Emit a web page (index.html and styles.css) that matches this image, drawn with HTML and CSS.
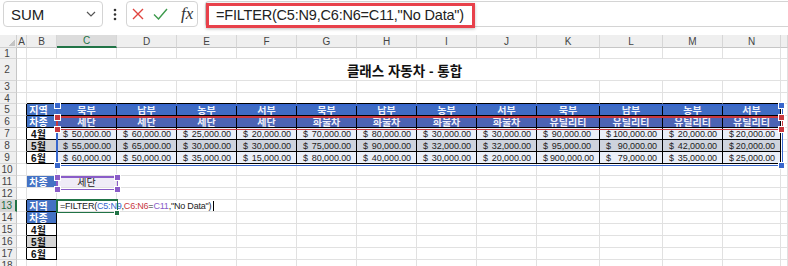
FILE: index.html
```html
<!DOCTYPE html>
<html lang="ko">
<head>
    <meta charset="UTF-8">
    <title>FILTER - 클래스 자동차</title>
    <link rel="stylesheet" href="styles.css">
</head>
<body>
<div class="app">
    <div class="fbar">
        <div class="namebox">
            <span>SUM</span>
            <svg width="10" height="6" viewBox="0 0 10 6"><path d="M1 1l4 4 4-4" fill="none" stroke="#555" stroke-width="1.2"/></svg>
        </div>
        <div class="more">
            <svg width="4" height="13" viewBox="0 0 4 13"><circle cx="2" cy="2" r="1.3" fill="#333"/><circle cx="2" cy="6.5" r="1.3" fill="#333"/><circle cx="2" cy="11" r="1.3" fill="#333"/></svg>
        </div>
        <div class="btns">
            <svg width="12" height="12" viewBox="0 0 12 12"><path d="M1 1l10 10M11 1L1 11" stroke="#e0443f" stroke-width="1.4"/></svg>
            <svg width="15" height="12" viewBox="0 0 15 12"><path d="M1 6.5l4.5 4.5L14 1" fill="none" stroke="#3d9a4c" stroke-width="1.4"/></svg>
            <span class="fx">fx</span>
        </div>
        <div class="input">
            <span class="ftext">=FILTER(C5:N9,C6:N6=C11,"No Data")</span>
            <div class="hl"></div>
        </div>
    </div>

    <div class="sheet">
        <!-- column headers -->
        <div class="corner"></div>
        <div class="ch">A</div><div class="ch">B</div><div class="ch csel">C</div><div class="ch">D</div><div class="ch">E</div><div class="ch">F</div><div class="ch">G</div><div class="ch">H</div><div class="ch">I</div><div class="ch">J</div><div class="ch">K</div><div class="ch">L</div><div class="ch">M</div><div class="ch">N</div><div class="ch"></div>

        <!-- 1 -->
        <div class="rh">1</div>
        <div></div><div></div><div></div><div></div><div></div><div></div><div></div><div></div><div></div><div></div><div></div><div></div><div></div><div></div><div></div>

        <!-- 2 -->
        <div class="rh">2</div>
        <div></div>
        <div class="title">클래스 자동차 - 통합</div>
        <div></div>

        <!-- 3 -->
        <div class="rh">3</div>
        <div></div><div></div><div></div><div></div><div></div><div></div><div></div><div></div><div></div><div></div><div></div><div></div><div></div><div></div><div></div>

        <!-- 4 -->
        <div class="rh">4</div>
        <div></div><div class="kb"></div><div class="kb"></div><div class="kb"></div><div class="kb"></div><div class="kb"></div><div class="kb"></div><div class="kb"></div><div class="kb"></div><div class="kb"></div><div class="kb"></div><div class="kb"></div><div class="kb"></div><div class="kb"></div><div></div>

        <!-- 5 -->
        <div class="rh">5</div>
        <div class="kr"></div>
        <div class="hd lab">지역</div>
        <div class="hd reg">북부</div><div class="hd reg">남부</div><div class="hd reg">동부</div><div class="hd reg">서부</div>
        <div class="hd reg">북부</div><div class="hd reg">남부</div><div class="hd reg">동부</div><div class="hd reg">서부</div>
        <div class="hd reg">북부</div><div class="hd reg">남부</div><div class="hd reg">동부</div><div class="hd reg">서부</div>
        <div></div>

        <!-- 6 -->
        <div class="rh">6</div>
        <div class="kr"></div>
        <div class="hd lab">차종</div>
        <div class="hd sub">세단</div><div class="hd sub">세단</div><div class="hd sub">세단</div><div class="hd sub">세단</div>
        <div class="hd sub">화물차</div><div class="hd sub">화물차</div><div class="hd sub">화물차</div><div class="hd sub">화물차</div>
        <div class="hd sub">유틸리티</div><div class="hd sub">유틸리티</div><div class="hd sub">유틸리티</div><div class="hd sub">유틸리티</div>
        <div></div>

        <!-- 7 -->
        <div class="rh">7</div>
        <div class="kr"></div>
        <div class="mo">4월</div>
        <div class="num"><span>$</span>50,000.00</div><div class="num"><span>$</span>60,000.00</div><div class="num"><span>$</span>25,000.00</div><div class="num"><span>$</span>20,000.00</div>
        <div class="num"><span>$</span>70,000.00</div><div class="num"><span>$</span>80,000.00</div><div class="num"><span>$</span>30,000.00</div><div class="num"><span>$</span>30,000.00</div>
        <div class="num wide"><span>$</span>90,000.00</div><div class="num"><span>$</span>100,000.00</div><div class="num"><span>$</span>20,000.00</div><div class="num"><span>$</span>20,000.00</div>
        <div></div>

        <!-- 8 -->
        <div class="rh">8</div>
        <div class="kr"></div>
        <div class="mo gray">5월</div>
        <div class="num alt"><span>$</span>55,000.00</div><div class="num alt"><span>$</span>65,000.00</div><div class="num alt"><span>$</span>30,000.00</div><div class="num alt"><span>$</span>30,000.00</div>
        <div class="num alt"><span>$</span>75,000.00</div><div class="num alt"><span>$</span>90,000.00</div><div class="num alt"><span>$</span>32,000.00</div><div class="num alt"><span>$</span>32,000.00</div>
        <div class="num alt wide"><span>$</span>95,000.00</div><div class="num alt"><span>$</span>90,000.00</div><div class="num alt"><span>$</span>42,000.00</div><div class="num alt"><span>$</span>20,000.00</div>
        <div></div>

        <!-- 9 -->
        <div class="rh">9</div>
        <div class="kr"></div>
        <div class="mo">6월</div>
        <div class="num"><span>$</span>60,000.00</div><div class="num"><span>$</span>50,000.00</div><div class="num"><span>$</span>35,000.00</div><div class="num"><span>$</span>15,000.00</div>
        <div class="num"><span>$</span>80,000.00</div><div class="num"><span>$</span>40,000.00</div><div class="num"><span>$</span>30,000.00</div><div class="num"><span>$</span>20,000.00</div>
        <div class="num"><span>$</span>900,000.00</div><div class="num"><span>$</span>79,000.00</div><div class="num"><span>$</span>35,000.00</div><div class="num"><span>$</span>25,000.00</div>
        <div></div>

        <!-- 10 -->
        <div class="rh">10</div>
        <div></div><div></div><div></div><div></div><div></div><div></div><div></div><div></div><div></div><div></div><div></div><div></div><div></div><div></div><div></div>

        <!-- 11 -->
        <div class="rh">11</div>
        <div></div>
        <div class="hd lab flat">차종</div>
        <div class="pick">세단</div>
        <div></div><div></div><div></div><div></div><div></div><div></div><div></div><div></div><div></div><div></div><div></div><div></div>

        <!-- 12 -->
        <div class="rh">12</div>
        <div></div><div class="kb"></div><div></div><div></div><div></div><div></div><div></div><div></div><div></div><div></div><div></div><div></div><div></div><div></div><div></div>

        <!-- 13 -->
        <div class="rh rsel">13</div>
        <div class="kr"></div>
        <div class="hd lab">지역</div>
        <div class="active"><span class="edit">=FILTER(<b class="fb">C5:N9</b>,<b class="fr">C6:N6</b>=<b class="fp">C11</b>,"No Data")<i class="caret"></i></span></div>
        <div></div><div></div><div></div><div></div><div></div><div></div><div></div><div></div><div></div><div></div><div></div><div></div>

        <!-- 14 -->
        <div class="rh">14</div>
        <div class="kr"></div>
        <div class="hd lab">차종</div>
        <div></div><div></div><div></div><div></div><div></div><div></div><div></div><div></div><div></div><div></div><div></div><div></div><div></div>

        <!-- 15 -->
        <div class="rh">15</div>
        <div class="kr"></div>
        <div class="mo">4월</div>
        <div></div><div></div><div></div><div></div><div></div><div></div><div></div><div></div><div></div><div></div><div></div><div></div><div></div>

        <!-- 16 -->
        <div class="rh">16</div>
        <div class="kr"></div>
        <div class="mo gray">5월</div>
        <div></div><div></div><div></div><div></div><div></div><div></div><div></div><div></div><div></div><div></div><div></div><div></div><div></div>

        <!-- 17 -->
        <div class="rh">17</div>
        <div class="kr"></div>
        <div class="mo">6월</div>
        <div></div><div></div><div></div><div></div><div></div><div></div><div></div><div></div><div></div><div></div><div></div><div></div><div></div>

        <!-- 18 -->
        <div class="rh">18</div>
        <div></div><div></div><div></div><div></div><div></div><div></div><div></div><div></div><div></div><div></div><div></div><div></div><div></div><div></div><div></div>

        <!-- range highlights drawn over the grid -->
        <div class="range blue"></div>
        <div class="range red"></div>
        <div class="range purple"></div>
        <div class="range green"></div>

        <i class="hnd blue" style="left:54px; top:67px"></i>
        <i class="hnd blue" style="left:54px; top:127px"></i>
        <i class="hnd blue" style="left:778px; top:67px"></i>
        <i class="hnd blue" style="left:778px; top:127px"></i>
        <i class="hnd red" style="left:54px; top:79px"></i>
        <i class="hnd red" style="left:54px; top:91px"></i>
        <i class="hnd red" style="left:778px; top:79px"></i>
        <i class="hnd red" style="left:778px; top:91px"></i>
        <i class="hnd purple" style="left:54px; top:139px"></i>
        <i class="hnd purple" style="left:114px; top:139px"></i>
        <i class="hnd purple" style="left:54px; top:151px"></i>
        <i class="hnd purple" style="left:114px; top:151px"></i>
        <i class="fill"></i>
    </div>
</div>
</body>
</html>
```

FILE: styles.css
```css
body {
    margin: 0;
    background: #fff;
    font-family: "Liberation Sans", "Noto Sans CJK KR", Arial, sans-serif;
    overflow: hidden;
}
.app {
    width: 788px;
    height: 266px;
    overflow: hidden;
}

/* formula bar */
.fbar {
    display: flex;
    align-items: flex-start;
    height: 35px;
    padding: 1px 0 0 3px;
    box-sizing: border-box;
}
.namebox {
    width: 100px;
    height: 26px;
    box-sizing: border-box;
    border: 1px solid #d4d4d4;
    border-radius: 4px;
    display: flex;
    align-items: center;
    justify-content: space-between;
    padding: 0 6px 0 7px;
    font-size: 15px;
    color: #222;
}
.more {
    width: 23px;
    height: 26px;
    display: flex;
    align-items: center;
    justify-content: center;
}
.btns {
    width: 72px;
    height: 26px;
    box-sizing: border-box;
    border: 1px solid #d4d4d4;
    border-radius: 4px;
    display: flex;
    align-items: center;
    padding-left: 5px;
    gap: 9px;
}
.fx {
    font-family: "Liberation Serif", "DejaVu Serif", serif;
    font-style: italic;
    font-size: 17px;
    color: #333;
    margin-left: 4px;
}
.input {
    flex: 1;
    margin-left: 7px;
    height: 26px;
    box-sizing: border-box;
    border: 1px solid #d4d4d4;
    border-right: 0;
    border-radius: 4px 0 0 4px;
    position: relative;
}
.ftext {
    display: block;
    padding-left: 10px;
    font-size: 14.5px;
    letter-spacing: -0.2px;
    line-height: 26px;
    color: #222;
}
.hl {
    position: absolute;
    left: 0;
    top: 1px;
    width: 269px;
    height: 25px;
    box-sizing: border-box;
    border: 3px solid #e8414b;
    box-shadow: 0 1px 3px rgba(0, 0, 0, 0.25);
}

/* grid */
.sheet {
    position: relative;
    display: grid;
    grid-template-columns: 17px 10px 30px repeat(8, 60px) 63px 63px 60px 58px 7px;
    grid-template-rows: 13px 11px 22px 12px 11px repeat(14, 12px);
}
.sheet > div {
    box-sizing: border-box;
    border-right: 1px solid #e1e1e1;
    border-bottom: 1px solid #e1e1e1;
    display: flex;
    align-items: center;
    overflow: hidden;
    white-space: nowrap;
    font-size: 9px;
    color: #222;
}
.sheet > .corner {
    background: #efefef linear-gradient(135deg, transparent 50%, #c4c4c4 50%) no-repeat;
    background-size: 7px 7px;
    background-position: 8px 4px;
    border-color: #d0d0d0;
}
.sheet > .ch {
    background: #efefef;
    border-color: #d6d6d6;
    border-bottom-color: #c6c6c6;
    justify-content: center;
    font-size: 10px;
    color: #444;
}
.sheet > .ch.csel {
    background: #dcdcdc;
    color: #217346;
    border-bottom: 2px solid #217346;
}
.sheet > .rh {
    background: #efefef;
    border-color: #d6d6d6;
    border-right-color: #c6c6c6;
    justify-content: center;
    padding-right: 2px;
    font-size: 10px;
    color: #444;
}
.sheet > .rh.rsel {
    background: #d6d6d6;
    color: #1e6b41;
    border-right: 2px solid #217346;
}
.sheet > .title {
    grid-column: span 13;
    justify-content: center;
    font-size: 13.5px;
    font-weight: bold;
    color: #111;
    padding-left: 2px;
}
.sheet > .kr { border-right-color: #000; }
.sheet > .kb { border-bottom-color: #000; }

.sheet > .hd {
    background: #4472c4;
    color: #fff;
    font-weight: bold;
    font-size: 10px;
    justify-content: center;
    border-color: #000;
}
.sheet > .hd.lab { padding-right: 6px; }
.sheet > .hd.flat { border-color: #e1e1e1; }
.sheet > .hd.reg { background: #3f6cc4; color: #eef2fb; }
.sheet > .hd.sub { background: #4c63b4; color: #eeeef8; }
.sheet > .mo {
    justify-content: center;
    padding-right: 6px;
    font-weight: bold;
    font-size: 10px;
    color: #111;
    border-color: #000;
}
.sheet > .gray { background: #d6d6d6; }
.sheet > .num {
    justify-content: space-between;
    padding: 0 5px 0 6px;
    background: #eaeff8;
    border-color: #000;
    letter-spacing: -0.1px;
}
.sheet > .num.alt { background: #ced3dd; }
.sheet > .num.wide { padding-right: 8px; }
.sheet > .pick {
    background: #efecf7;
    justify-content: center;
    font-size: 10px;
    color: #222;
}
.sheet > .active {
    overflow: visible;
    position: relative;
    z-index: 2;
}
.edit {
    background: #fff;
    padding: 0 2px 0 3px;
    font-size: 9px;
    letter-spacing: -0.2px;
    line-height: 10px;
    color: #222;
    display: flex;
    align-items: center;
}
.edit b { font-weight: normal; }
.edit .fb { color: #3766cc; }
.edit .fr { color: #c8383e; }
.edit .fp { color: #8a5cc8; }
.caret {
    display: inline-block;
    width: 1px;
    height: 10px;
    background: #000;
    margin-left: 2px;
}

/* range outlines */
.range {
    position: absolute;
    box-sizing: border-box;
    border: 2px solid;
    pointer-events: none;
}
.range.blue { left: 56px; top: 69px; width: 727px; height: 62px; border-color: #3766cc; }
.range.red { left: 56px; top: 81px; width: 727px; height: 14px; border-color: #c8383e; }
.range.purple { left: 56px; top: 141px; width: 62px; height: 14px; border-color: #8a5cc8; }
.range.green { left: 56px; top: 164px; width: 62px; height: 14px; border-color: #217346; z-index: 3; }

.hnd {
    position: absolute;
    width: 7px;
    height: 7px;
    box-sizing: border-box;
    border: 1px solid #fff;
    z-index: 4;
}
.hnd.blue { background: #3766cc; }
.hnd.red { background: #c8383e; }
.hnd.purple { background: #8a5cc8; }
.fill {
    position: absolute;
    left: 114px;
    top: 175px;
    width: 6px;
    height: 6px;
    box-sizing: border-box;
    background: #217346;
    border: 1px solid #fff;
    z-index: 4;
}
```
